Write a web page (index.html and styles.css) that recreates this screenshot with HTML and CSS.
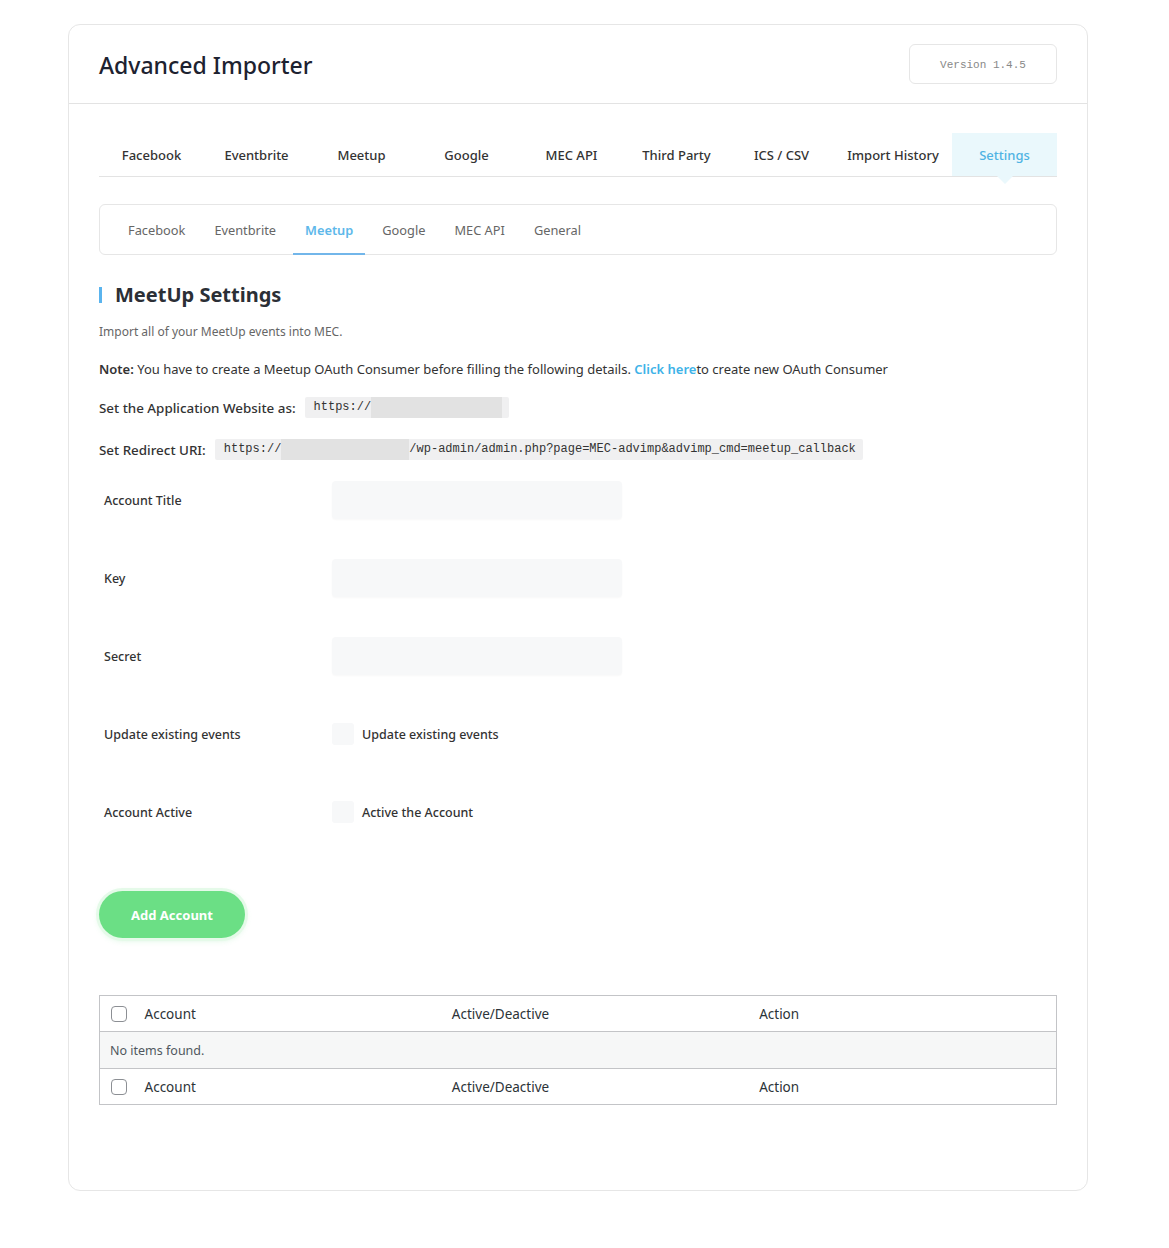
FILE: index.html
```html
<!DOCTYPE html>
<html lang="en">
<head>
<meta charset="utf-8">
<title>Advanced Importer</title>
<link rel="stylesheet" href="styles.css">
</head>
<body>
<div class="card">
  <header class="card-head">
    <h1 class="title">Advanced Importer</h1>
    <div class="version">Version 1.4.5</div>
  </header>
  <div class="card-body">
    <nav class="main-tabs">
      <a class="mtab">Facebook</a>
      <a class="mtab">Eventbrite</a>
      <a class="mtab">Meetup</a>
      <a class="mtab">Google</a>
      <a class="mtab">MEC API</a>
      <a class="mtab">Third Party</a>
      <a class="mtab">ICS / CSV</a>
      <a class="mtab">Import History</a>
      <a class="mtab active">Settings</a>
    </nav>
    <nav class="sub-tabs">
      <a class="stab">Facebook</a>
      <a class="stab">Eventbrite</a>
      <a class="stab active">Meetup</a>
      <a class="stab">Google</a>
      <a class="stab">MEC API</a>
      <a class="stab">General</a>
    </nav>

    <h2 class="section-title">MeetUp Settings</h2>
    <p class="desc">Import all of your MeetUp events into MEC.</p>
    <p class="note"><strong>Note:</strong> You have to create a Meetup OAuth Consumer before filling the following details. <a class="link">Click here</a>to create new OAuth Consumer</p>
    <p class="setline"><span class="setlabel">Set the Application Website as:</span><code class="code">https://<span class="redact r1"></span></code></p>
    <p class="setline"><span class="setlabel">Set Redirect URI:</span><code class="code">https://<span class="redact r2"></span>/wp-admin/admin.php?page=MEC-advimp&amp;advimp_cmd=meetup_callback</code></p>

    <div class="form">
      <div class="frow"><label class="flabel">Account Title</label><span class="input"></span></div>
      <div class="frow"><label class="flabel">Key</label><span class="input"></span></div>
      <div class="frow"><label class="flabel">Secret</label><span class="input"></span></div>
      <div class="frow"><label class="flabel">Update existing events</label><span class="check"></span><span class="clabel">Update existing events</span></div>
      <div class="frow"><label class="flabel">Account Active</label><span class="check"></span><span class="clabel">Active the Account</span></div>
    </div>

    <button class="add-btn">Add Account</button>

    <table class="list">
      <thead>
        <tr><td class="cb"><span class="wpcb"></span></td><th>Account</th><th>Active/Deactive</th><th>Action</th></tr>
      </thead>
      <tbody>
        <tr class="empty"><td colspan="4">No items found.</td></tr>
      </tbody>
      <tfoot>
        <tr><td class="cb"><span class="wpcb"></span></td><th>Account</th><th>Active/Deactive</th><th>Action</th></tr>
      </tfoot>
    </table>
  </div>
</div>
</body>
</html>
```

FILE: styles.css
```css
* { box-sizing: border-box; }
html, body { margin: 0; padding: 0; background: #fff; }
body {
  font-family: "Noto Sans", "Open Sans", sans-serif;
  color: #333;
  padding: 24px 0 58px 68px;
}
.card {
  width: 1020px;
  height: 1167px;
  border: 1px solid #e6e6e6;
  border-radius: 12px;
  background: #fff;
}
.card-head {
  height: 79px;
  border-bottom: 1px solid #e3e3e3;
  display: flex;
  align-items: center;
  justify-content: space-between;
  padding: 0 30px;
}
.title {
  margin: 2px 0 0 0;
  font-size: 23px;
  font-weight: 500;
  color: #1d2230;
}
.version {
  width: 148px;
  height: 40px;
  border: 1px solid #e6e6e6;
  border-radius: 6px;
  font-family: "Liberation Mono", monospace;
  font-size: 11px;
  color: #888;
  display: flex;
  align-items: center;
  justify-content: center;
  padding-top: 1px;
}
.card-body { padding: 29px 30px 0 30px; }
.main-tabs {
  display: flex;
  height: 44px;
  border-bottom: 1px solid #e3e3e3;
}
.mtab {
  min-width: 105px;
  padding: 0 16px;
  display: flex;
  align-items: center;
  justify-content: center;
  font-size: 13px;
  font-weight: 500;
  color: #333;
  white-space: nowrap;
  position: relative;
}
.mtab.active {
  flex: 1;
  background: #eaf8fc;
  color: #4fb3e3;
}
.mtab.active::after {
  content: "";
  position: absolute;
  left: 50%;
  bottom: -8px;
  margin-left: -8px;
  border-left: 8px solid transparent;
  border-right: 8px solid transparent;
  border-top: 8px solid #eaf8fc;
}
.sub-tabs {
  margin-top: 27px;
  height: 51px;
  border: 1px solid #e6e6e6;
  border-radius: 6px;
  display: flex;
  align-items: stretch;
  padding: 0 16px;
  gap: 5px;
}
.stab {
  padding: 0 12px;
  display: flex;
  align-items: center;
  font-size: 12.8px;
  color: #666;
  border-bottom: 2px solid transparent;
  margin-bottom: -1px;
  padding-top: 1px;
}
.stab.active {
  color: #5db8ea;
  font-weight: 600;
  border-bottom-color: #72b6ea;
}
.section-title {
  margin: 26px 0 0 0;
  font-size: 20px;
  font-weight: 700;
  color: #2b2f36;
  line-height: 27px;
  height: 27px;
  display: flex;
  align-items: center;
  position: relative;
  padding-left: 16px;
}
.section-title::before {
  content: "";
  position: absolute;
  left: 0;
  top: 6px;
  width: 3px;
  height: 16px;
  background: #5ab4ee;
}
.desc {
  margin: 15px 0 0 0;
  font-size: 12px;
  line-height: 18px;
  color: #666;
}
.note {
  margin: 19px 0 0 0;
  font-size: 13px;
  line-height: 18px;
  color: #333;
}
.note strong { font-weight: 600; }
.link { color: #3fb3e8; font-weight: 600; }
.setline {
  margin: 19px 0 0 0;
  display: flex;
  align-items: center;
  font-size: 13.4px;
  color: #333;
  height: 21px;
}
.setline + .setline { margin-top: 21px; }
.setlabel { font-weight: 500; margin-right: 9px; }
.code {
  font-family: "Liberation Mono", monospace;
  font-size: 12px;
  background: #f0f0f1;
  color: #333;
  height: 21px;
  line-height: 21px;
  padding: 0 7px 0 9px;
  display: inline-flex;
  align-items: center;
  border-radius: 2px;
}
.redact {
  display: inline-block;
  height: 21px;
  background: #e2e2e2;
}
.r1 { width: 131px; }
.r2 { width: 128px; }
.form { margin-top: 21px; padding-left: 5px; }
.frow {
  display: flex;
  align-items: center;
  height: 38px;
  margin-bottom: 40px;
}
.frow:last-child { margin-bottom: 0; }
.flabel {
  width: 228px;
  font-size: 12.5px;
  font-weight: 500;
  color: #333;
}
.input {
  width: 290px;
  height: 38px;
  background: #f7f8f9;
  border-radius: 4px;
  box-shadow: 0 1px 2px rgba(0,0,0,0.03);
}
.check {
  width: 22px;
  height: 22px;
  background: #f7f8f9;
  border-radius: 3px;
  margin-right: 8px;
}
.clabel { font-size: 12.5px; font-weight: 500; color: #333; }
.add-btn {
  display: block;
  margin-top: 60px;
  width: 146px;
  height: 47px;
  border: none;
  border-radius: 24px;
  background: #6bdf85;
  color: #fff;
  font-family: "Noto Sans", sans-serif;
  font-size: 13px;
  font-weight: 700;
  box-shadow: 0 0 0 3px #e5fae9, 0 2px 6px rgba(107,223,133,0.3);
  padding: 0;
}
.list {
  margin-top: 57px;
  width: 958px;
  border-collapse: collapse;
  border: 1px solid #c3c4c7;
  font-size: 13.5px;
  color: #2c3338;
}
.list td, .list th {
  height: 36px;
  padding: 0 10px;
  text-align: left;
  font-weight: 400;
}
.list thead tr { border-bottom: 1px solid #c3c4c7; }
.list tfoot tr { border-top: 1px solid #c3c4c7; }
.list .cb { width: 35px; padding: 0 0 0 11px; vertical-align: middle; }
.list th { width: 307px; }
.wpcb {
  display: block;
  width: 16px;
  height: 16px;
  border: 1px solid #8c8f94;
  border-radius: 4px;
  background: #fff;
}
.list .empty td {
  background: #f6f7f7;
  font-size: 12.5px;
  color: #50575e;
  height: 37px;
}
```
